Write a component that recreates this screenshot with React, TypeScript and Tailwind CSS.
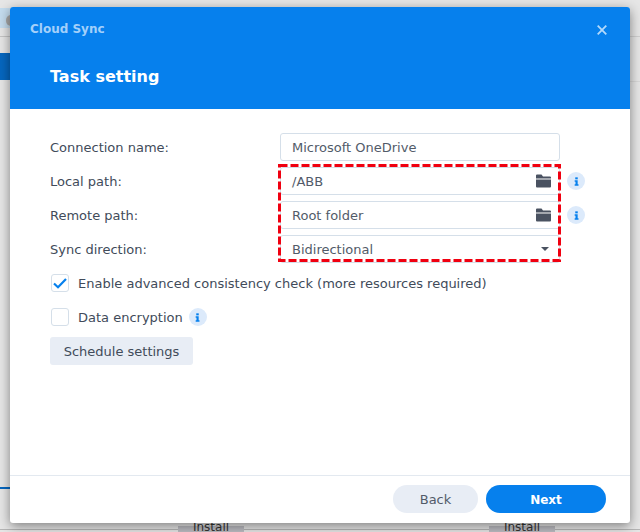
import React from 'react';

const font = "font-['DejaVu_Sans',sans-serif]";

const FolderIcon = () => (
  <svg width="15" height="14" viewBox="0 0 15 14" className="shrink-0">
    <path d="M0 1.5 Q0 0.5 1 0.5 H5.5 L7 2.5 H14 Q15 2.5 15 3.5 V4.5 H0 Z" fill="#4a5261" />
    <path d="M0 5.5 H15 V12.5 Q15 13.5 14 13.5 H1 Q0 13.5 0 12.5 Z" fill="#4a5261" />
  </svg>
);

const InfoBadge = () => (
  <div className="w-[18px] h-[18px] rounded-full bg-[#dceafb] flex items-center justify-center shrink-0">
    <svg width="5" height="9" viewBox="0 0 6 10">
      <rect x="1.5" y="0" width="3" height="2.4" fill="#0680ed" />
      <path d="M0.8 3.6 H4.4 V8.4 H5.4 V10 H0.8 V8.4 H1.8 V5.2 H0.8 Z" fill="#0680ed" />
    </svg>
  </div>
);

const Field = ({ label, value, icon, info }: { label: string; value: string; icon?: React.ReactNode; info?: boolean }) => (
  <div className="flex items-center h-[28px]">
    <div className="w-[230px] text-[13px] pt-[2px] text-[#414b5a]">{label}</div>
    <div className="w-[280px] h-[28px] border border-[#d5dfe9] rounded-[3px] pl-[11px] pr-[8px] flex items-center justify-between text-[13px] text-[#525b69]">
      <span className="pt-[2px]">{value}</span>
      {icon}
    </div>
    {info && <div className="ml-[7px]"><InfoBadge /></div>}
  </div>
);

const App = () => {
  return (
    <div className={`relative w-[640px] h-[532px] overflow-hidden bg-[#e6e6e6] ${font}`}>
      {/* dimmed window behind the dialog */}
      <div className="absolute left-0 top-[8px] w-[10px] h-[20px] bg-[#c4dcee]" />
      <div className="absolute left-[6px] top-[15px] w-[10px] h-[11px] rounded-full bg-[#a9a9a9]" />
      <div className="absolute left-0 top-[53px] w-[10px] h-[27px] bg-[#0667c0]" />
      <div className="absolute left-0 top-[487px] w-[10px] h-[2px] bg-[#0667c0]" />
      <div className="absolute left-0 top-[36px] w-[10px] h-px bg-[#c4c4c4]" />
      <div className="absolute right-0 top-[36px] w-[10px] h-px bg-[#cfcfcf]" />
      <div className="absolute right-0 top-[81px] w-[10px] h-px bg-[#d8d8d8]" />
      <div className="absolute left-0 top-[529px] w-full h-px bg-[#b5b5b5]" />
      <div className="absolute left-[178px] top-[526px] w-[66px] h-[6px] bg-[#bcbcc2] text-[12px] leading-[12px] text-center text-[#333]">
        <span className="block -mt-[5px]">Install</span>
      </div>
      <div className="absolute left-[489px] top-[526px] w-[66px] h-[6px] bg-[#bcbcc2] text-[12px] leading-[12px] text-center text-[#333]">
        <span className="block -mt-[5px]">Install</span>
      </div>

      <div className="absolute left-[10px] top-[7px] w-[620px] h-[516px] bg-white rounded-[3px] overflow-hidden shadow-[0_3px_12px_rgba(0,0,0,0.45)] flex flex-col">
        <div className="h-[102px] bg-[#0680ed] shrink-0 relative">
          <div className="pl-[20px] pt-[14px] text-[12px] leading-[16px] font-bold text-[#a3d0fa]">Cloud Sync</div>
          <div className="pl-[40px] pt-[28px] text-[16px] leading-[24px] font-bold text-white">Task setting</div>
          <svg width="10" height="10" viewBox="0 0 10 10" className="absolute right-[23px] top-[18px]">
            <path d="M0.7 0.7 L9.3 9.3 M9.3 0.7 L0.7 9.3" stroke="#b3d9fb" strokeWidth="1.8" />
          </svg>
        </div>

        <div className="flex-1 pl-[40px] pt-[24px]">
          <div className="flex flex-col gap-[6px]">
            <Field label="Connection name:" value="Microsoft OneDrive" />
            <Field label="Local path:" value="/ABB" icon={<FolderIcon />} info />
            <Field label="Remote path:" value="Root folder" icon={<FolderIcon />} info />
            <Field
              label="Sync direction:"
              value="Bidirectional"
              icon={<div className="w-0 h-0 mr-[2px] border-x-[4px] border-x-transparent border-t-[4px] border-t-[#4a5261]" />}
            />
          </div>

          <div className="flex items-center h-[28px] mt-[6px] text-[13px] text-[#414b5a]">
            <div className="w-[18px] h-[18px] ml-px border border-[#d5dfe9] rounded-[3px] flex items-center justify-center mr-[9px]">
              <svg width="14" height="11" viewBox="0 0 14 11">
                <path d="M1 5.5 L5 9.2 L13 1" fill="none" stroke="#0680ed" strokeWidth="2.2" />
              </svg>
            </div>
            <span className="pt-[2px]">Enable advanced consistency check (more resources required)</span>
          </div>
          <div className="flex items-center h-[28px] mt-[6px] text-[13px] text-[#414b5a]">
            <div className="w-[18px] h-[18px] ml-px border border-[#d5dfe9] rounded-[3px] mr-[9px]" />
            <span className="pt-[2px]">Data encryption</span>
            <div className="ml-[6px]"><InfoBadge /></div>
          </div>
          <button className="mt-[6px] h-[28px] w-[143px] pt-[2px] bg-[#e8edf5] rounded-[3px] text-[13px] text-[#414b5a]">
            Schedule settings
          </button>
        </div>

        <div className="h-[48px] shrink-0 border-t border-[#e3e9f0] pt-[9px] pr-[24px] flex justify-end gap-[8px]">
          <button className="w-[85px] h-[28px] pt-[2px] rounded-full bg-[#e8edf5] text-[13px] text-[#525b69]">Back</button>
          <button className="w-[120px] h-[28px] pt-[2px] rounded-full bg-[#0680ed] text-[12px] font-bold text-white">Next</button>
        </div>
      </div>

      {/* red annotation around the path fields */}
      <svg width="283" height="98" viewBox="0 0 283 98" className="absolute left-[278px] top-[164px]">
        <rect x="1.5" y="1.5" width="280" height="95" fill="none" stroke="#f00010" strokeWidth="3" strokeDasharray="8 3" />
      </svg>
    </div>
  );
};

export default App;
